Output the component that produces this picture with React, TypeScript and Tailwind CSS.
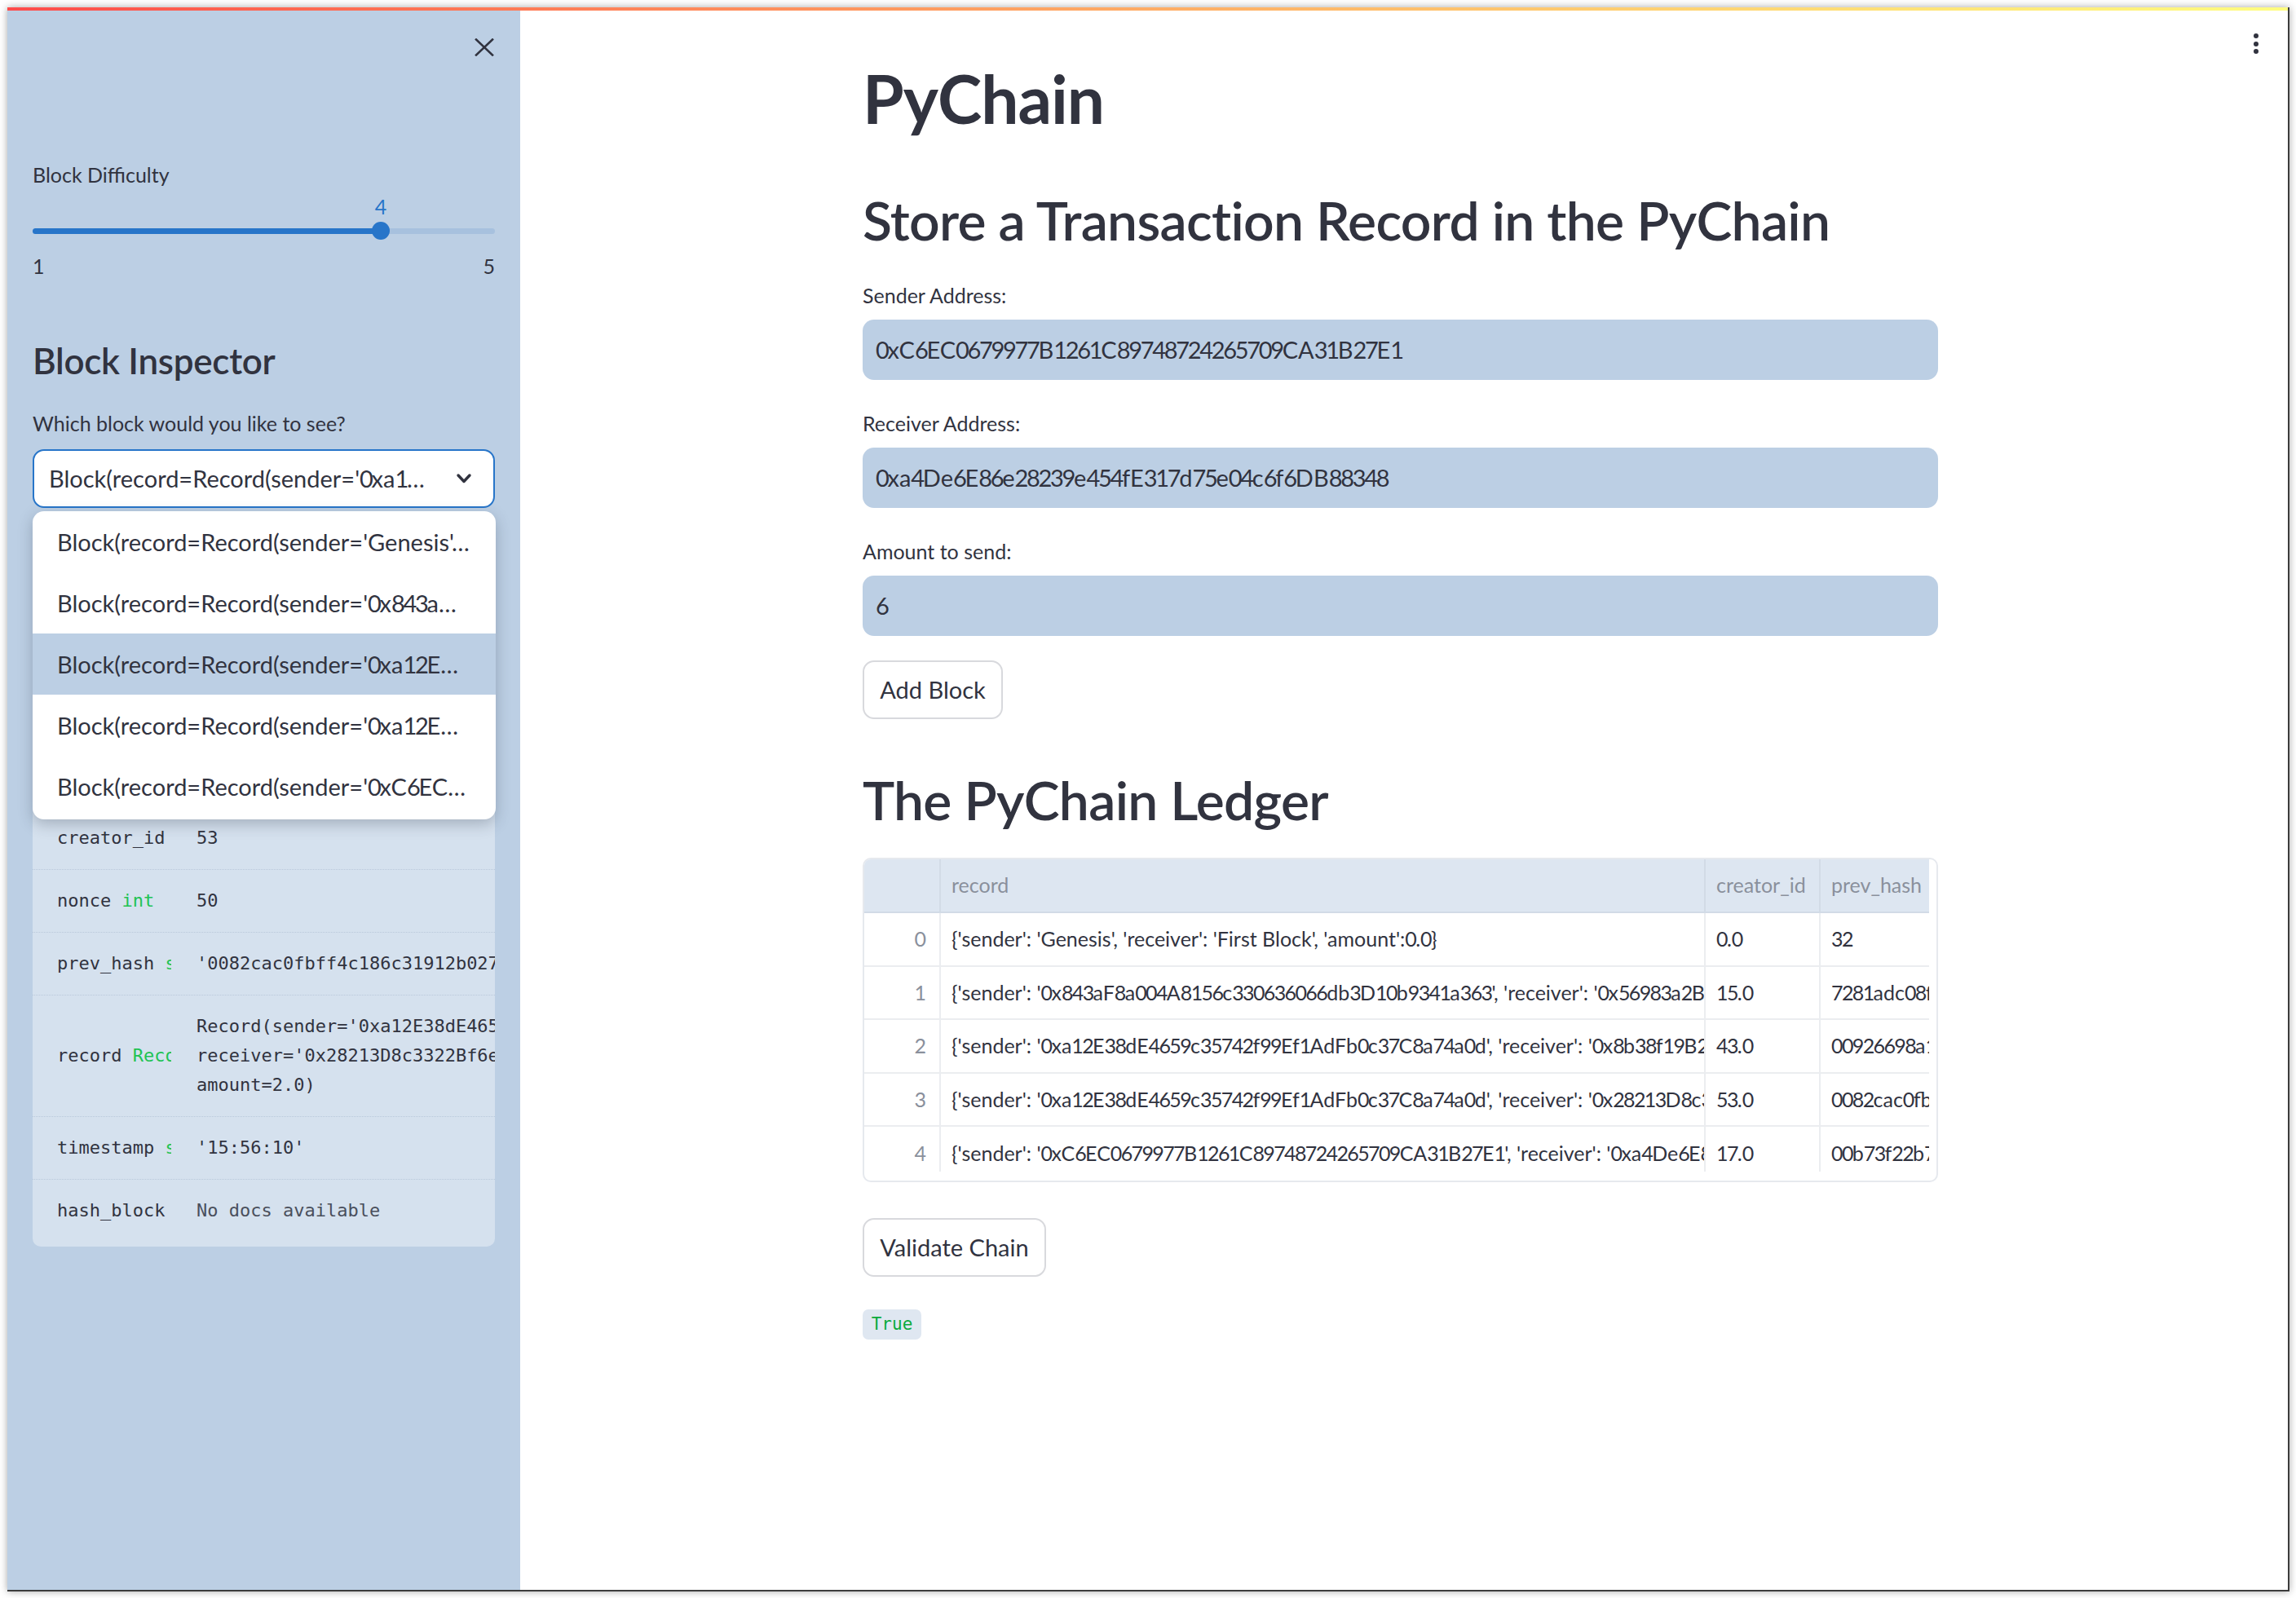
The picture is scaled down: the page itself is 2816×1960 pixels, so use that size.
import React from "react";

const MONO = "font-['DejaVu_Sans_Mono',monospace]";

function Tn({ text, tight = true }: { text: string; tight?: boolean }) {
  const parts = text.split(/(\d+)/);
  const cls = tight ? "tracking-[-0.08em]" : "tracking-[-0.065em]";
  return (
    <>
      {parts.map((p, i) =>
        /^\d+$/.test(p) ? (
          <span key={i} className={cls}>
            {p}
          </span>
        ) : (
          <React.Fragment key={i}>{p}</React.Fragment>
        )
      )}
    </>
  );
}

function CloseIcon() {
  return (
    <svg width="24" height="22" viewBox="0 0 24 22" fill="none" stroke="#31333f" strokeWidth="2.6" strokeLinecap="square">
      <line x1="2" y1="1.5" x2="22" y2="20.5" />
      <line x1="22" y1="1.5" x2="2" y2="20.5" />
    </svg>
  );
}

function Chevron() {
  return (
    <svg width="20" height="14" viewBox="0 0 20 14" fill="none" stroke="#31333f" strokeWidth="3.4" strokeLinecap="round" strokeLinejoin="round">
      <polyline points="3,3 10,10.5 17,3" />
    </svg>
  );
}

const helpRows: { label: string; type?: string; value: string; muted?: boolean }[] = [
  { label: "creator_id", type: "int", value: "53" },
  { label: "nonce", type: "int", value: "50" },
  { label: "prev_hash", type: "str", value: "'0082cac0fbff4c186c31912b027a6f4e1b2c3d4e5f60718293a4b5c6d7e8f901'" },
  {
    label: "record",
    type: "Record",
    value:
      "Record(sender='0xa12E38dE4659c35742f99Ef1AdFb0c37C8a74a0d',\nreceiver='0x28213D8c3322Bf6e0F3dC5f7f1cEA7eB2D8B9a4F',\namount=2.0)",
  },
  { label: "timestamp", type: "str", value: "'15:56:10'" },
  { label: "hash_block", value: "No docs available", muted: true },
];

const menuItems = [
  "Block(record=Record(sender='Genesis'…",
  "Block(record=Record(sender='0x843a…",
  "Block(record=Record(sender='0xa12E…",
  "Block(record=Record(sender='0xa12E…",
  "Block(record=Record(sender='0xC6EC…",
];

function Sidebar() {
  return (
    <div className="relative w-[629px] shrink-0 h-full bg-[#bccfe4] px-[31px] pt-[188px]">
      <div className="absolute left-[573px] top-[38px]">
        <CloseIcon />
      </div>

      <div className="text-[25px] leading-[34px]">Block Difficulty</div>

      <div className="relative h-[30px] mt-[7px]">
        <div className="absolute left-[427px] -translate-x-1/2 text-[25px] leading-[30px] text-[#2775c9]">4</div>
      </div>
      <div className="relative h-[22px] mt-[4px] flex items-center">
        <div className="w-full h-[7px] rounded-full bg-[#a7c1de] flex">
          <div className="w-[75.2%] h-full rounded-full bg-[#2775c9]" />
        </div>
        <div className="absolute left-[416px] top-0 w-[22px] h-[22px] rounded-full bg-[#2775c9]" />
      </div>
      <div className="mt-[17px] flex justify-between text-[25px] leading-[30px]">
        <span>1</span>
        <span>5</span>
      </div>

      <div className="mt-[74px] text-[44px] leading-[54px] font-semibold tracking-[-0.3px]">Block Inspector</div>

      <div className="mt-[33px] text-[25px] leading-[34px]">Which block would you like to see?</div>

      <div className="mt-[15px] h-[72px] rounded-[14px] border-2 border-[#2775c9] bg-white flex items-center justify-between pl-[18px] pr-[26px]">
        <span className="text-[29px] whitespace-nowrap">
          <Tn text="Block(record=Record(sender='0xa1…" />
        </span>
        <Chevron />
      </div>

      <div className="mt-[30px] rounded-[10px] bg-[#d5e1ee] overflow-hidden pb-[6px]">
        <div className={`h-[337px] px-[30px] pt-[26px] ${MONO} text-[22px] leading-[36px] whitespace-nowrap overflow-hidden`}>
          <div className="font-bold">Block</div>
          <div className="text-[#21c354]">class</div>
          <div className="mt-[10px] text-[#555a66]">Block(record: Record, creator_id: int,</div>
          <div className="text-[#555a66]">prev_hash: str = '0', timestamp: str,</div>
          <div className="text-[#555a66]">nonce: int = 0)</div>
        </div>
        {helpRows.map((r, i) => (
          <div
            key={r.label}
            className={`flex items-center ${MONO} text-[22px] leading-[36px] py-[20px] ${i < helpRows.length - 1 ? "border-b border-dotted border-[#b9c8da]" : ""}`}
          >
            <div className="w-[170px] shrink-0 pl-[30px] overflow-hidden whitespace-nowrap text-[#31333f]">
              {r.label}
              {r.type ? <span className="text-[#21c354]"> {r.type}</span> : null}
            </div>
            <div className={`pl-[31px] overflow-hidden whitespace-pre ${r.muted ? "text-[#4a4f5c]" : "text-[#31333f]"}`}>
              {r.value}
            </div>
          </div>
        ))}
      </div>

      <div className="absolute left-[31px] top-[618px] w-[568px] h-[378px] z-10 rounded-[14px] bg-white shadow-[0_6px_18px_rgba(40,50,70,0.28)] overflow-hidden">
        {menuItems.map((m, i) => (
          <div
            key={i}
            className={`h-[75px] flex items-center pl-[30px] text-[29px] whitespace-nowrap ${i === 2 ? "bg-[#bccfe4]" : ""}`}
          >
            <Tn text={m} />
          </div>
        ))}
      </div>
    </div>
  );
}

const tableRows = [
  ["0", "{'sender': 'Genesis', 'receiver': 'First Block', 'amount': 0.0}", "0.0", "32"],
  [
    "1",
    "{'sender': '0x843aF8a004A8156c330636066db3D10b9341a363', 'receiver': '0x56983a2B8d7bA4cE1f9c3D2e5A7b8C9d0E1f2A3b', 'amount': 5.0}",
    "15.0",
    "7281adc08f3b2e",
  ],
  [
    "2",
    "{'sender': '0xa12E38dE4659c35742f99Ef1AdFb0c37C8a74a0d', 'receiver': '0x8b38f19B2e4C5d6A7f8E9a0B1c2D3e4F5a6B7c8D', 'amount': 3.0}",
    "43.0",
    "00926698a1c4d2",
  ],
  [
    "3",
    "{'sender': '0xa12E38dE4659c35742f99Ef1AdFb0c37C8a74a0d', 'receiver': '0x28213D8c3322Bf6e0F3dC5f7f1cEA7eB2D8B9a4F', 'amount': 2.0}",
    "53.0",
    "0082cac0fbff4c",
  ],
  [
    "4",
    "{'sender': '0xC6EC0679977B1261C89748724265709CA31B27E1', 'receiver': '0xa4De6E86e28239e454fE317d75e04c6f6DB88348', 'amount': 6.0}",
    "17.0",
    "00b73f22b7e9a1",
  ],
];

function Ledger() {
  return (
    <div className="mt-[31px] w-[1319px] h-[398px] rounded-[10px] border-2 border-[#e6e9ee] overflow-hidden pr-[9px] pb-[11px]">
      <div className="h-full overflow-hidden text-[25px]">
        <div className="flex h-[66px] bg-[#dde6f1] border-b-2 border-[#d2dbe6] text-[#8a909c]">
          <div className="w-[94px] shrink-0 border-r-2 border-[#d2dbe6]" />
          <div className="w-[938px] shrink-0 border-r-2 border-[#d2dbe6] pl-[13px] flex items-center">record</div>
          <div className="w-[141px] shrink-0 border-r-2 border-[#d2dbe6] pl-[13px] flex items-center whitespace-nowrap">creator_id</div>
          <div className="flex-1 pl-[13px] flex items-center whitespace-nowrap overflow-hidden">prev_hash</div>
        </div>
        {tableRows.map((r, i) => (
          <div key={i} className={`flex h-[65.5px] ${i < tableRows.length - 1 ? "border-b-2 border-[#ebedf0]" : ""}`}>
            <div className="w-[94px] shrink-0 border-r-2 border-[#ebedf0] pr-[16px] flex items-center justify-end text-[#8a909c]">
              {r[0]}
            </div>
            <div className="w-[938px] shrink-0 border-r-2 border-[#ebedf0] pl-[13px] flex items-center whitespace-nowrap overflow-hidden text-[#31333f]">
              <Tn text={r[1]} tight={false} />
            </div>
            <div className="w-[141px] shrink-0 border-r-2 border-[#ebedf0] pl-[13px] flex items-center whitespace-nowrap text-[#31333f]">
              <Tn text={r[2]} tight={false} />
            </div>
            <div className="flex-1 pl-[13px] flex items-center whitespace-nowrap overflow-hidden text-[#31333f]">
              <Tn text={r[3]} tight={false} />
            </div>
          </div>
        ))}
      </div>
    </div>
  );
}

function Field({ label, value, first }: { label: string; value: string; first?: boolean }) {
  return (
    <>
      <div className={`${first ? "mt-[31px]" : "mt-[32px]"} text-[25px] leading-[42px]`}>{label}</div>
      <div className="mt-[9px] h-[74px] rounded-[14px] bg-[#bccfe4] flex items-center pl-[16px] text-[29px] whitespace-nowrap">
        <Tn text={value} />
      </div>
    </>
  );
}

function Main() {
  return (
    <div className="relative flex-1 h-full bg-white pl-[420px] pt-[62px]">
      <div className="absolute right-[36px] top-[32px] flex flex-col gap-[3.5px]">
        <div className="w-[6px] h-[6px] rounded-full bg-[#31333f]" />
        <div className="w-[6px] h-[6px] rounded-full bg-[#31333f]" />
        <div className="w-[6px] h-[6px] rounded-full bg-[#31333f]" />
      </div>
      <div className="w-[1319px] flex flex-col items-start">
        <h1 className="text-[82px] leading-[98px] font-bold tracking-[-1px]">PyChain</h1>
        <h2 className="mt-[60px] text-[66px] leading-[81px] font-semibold tracking-[-0.7px] whitespace-nowrap">
          Store a Transaction Record in the PyChain
        </h2>
        <div className="w-full">
          <Field label="Sender Address:" value="0xC6EC0679977B1261C89748724265709CA31B27E1" first />
          <Field label="Receiver Address:" value="0xa4De6E86e28239e454fE317d75e04c6f6DB88348" />
          <Field label="Amount to send:" value="6" />
        </div>
        <button className="mt-[30px] h-[72px] w-[172px] rounded-[14px] border-2 border-[#d8d9dd] bg-white text-[29px] text-[#31333f]">
          Add Block
        </button>
        <h2 className="mt-[58px] text-[66px] leading-[81px] font-semibold tracking-[-0.7px]">The PyChain Ledger</h2>
        <Ledger />
        <button className="mt-[44px] h-[72px] w-[225px] rounded-[14px] border-2 border-[#d8d9dd] bg-white text-[29px] text-[#31333f]">
          Validate Chain
        </button>
        <div className={`mt-[40px] h-[37px] w-[72px] rounded-[7px] bg-[#dfe7f1] flex items-center justify-center ${MONO} text-[21px] text-[#09ab3b]`}>
          True
        </div>
      </div>
    </div>
  );
}

export default function App() {
  return (
    <div className="w-[2816px] h-[1960px] bg-white pl-[9px] pt-[9px] font-['Lato',sans-serif] text-[#31333f] overflow-hidden">
      <div className="relative w-[2799px] h-[1943px] flex overflow-hidden border-r-2 border-b-2 border-[#3c3c3c] shadow-[0_0_9px_rgba(0,0,0,0.35)] bg-white">
        <div className="absolute left-0 top-0 right-0 h-[4px] bg-linear-to-r from-[#ff4b4b] to-[#fffd80] z-20" />
        <Sidebar />
        <Main />
      </div>
    </div>
  );
}
